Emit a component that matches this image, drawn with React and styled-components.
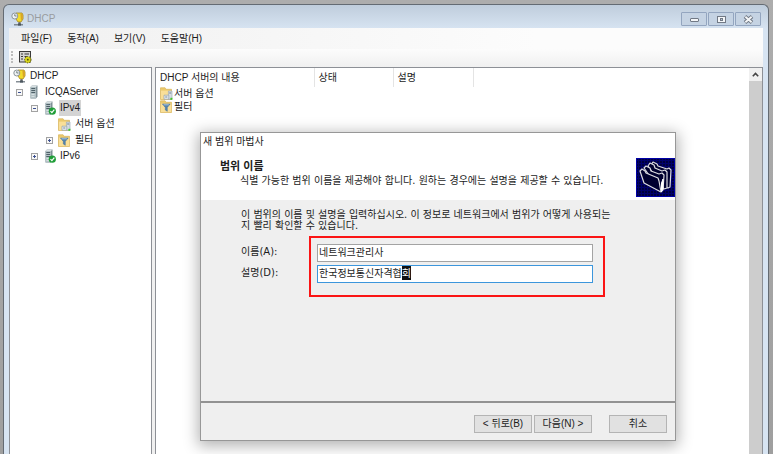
import { useEffect, useRef } from 'react'
import styled, { createGlobalStyle } from 'styled-components'

const GlobalStyle = createGlobalStyle`
  * {
    box-sizing: border-box;
  }

  body {
    margin: 0;
    background: #a6a6a6;
    color: #1c1c1c;
    font: 10px/16px "Liberation Sans", "Noto Sans CJK KR", sans-serif;
  }

  button, input {
    font: inherit;
    color: inherit;
  }
`

const Desktop = styled.div`
  height: 100vh;
  padding: 4px 4px 0 3px;
  overflow: hidden;
  background: linear-gradient(180deg, #adadad 0%, #9f9f9f 100%);
`

const Window = styled.main`
  position: relative;
  display: flex;
  flex-direction: column;
  height: 100%;
  padding: 0 5px;
  border: 1px solid #646b73;
  border-bottom: 0;
  border-radius: 6px 6px 0 0;
  background: linear-gradient(180deg, #bfcddc 0, #d7e4f2 24px);
`

const TitleBar = styled.header`
  display: flex;
  align-items: center;
  gap: 3px;
  height: 23px;
  flex: none;
  padding: 5px 2px 0;
`

const WindowTitle = styled.h1`
  flex: 1;
  margin: 0;
  color: #999c9f;
  font-size: 10px;
  font-weight: 400;
`

const CaptionButtons = styled.div`
  display: flex;
  gap: 1px;
`

const CaptionButton = styled.button`
  display: grid;
  place-items: center;
  width: 26px;
  height: 14px;
  padding: 0;
  border: 1px solid #93a5bf;
  border-radius: 1px;
  background: #c5d3e3;
`

const MenuBar = styled.nav`
  display: flex;
  align-items: center;
  gap: 15px;
  flex: none;
  height: 21px;
  padding-left: 12px;
  background: linear-gradient(90deg, #f0f0f0 0%, #fcfcfc 70%);
`

const MenuItem = styled.button`
  padding: 0;
  border: 0;
  background: none;
`

const Toolbar = styled.div`
  display: flex;
  align-items: center;
  gap: 6px;
  flex: none;
  height: 18px;
  padding: 0 2px 2px;
  background: linear-gradient(180deg, #fcfcfc 0%, #f0f0f0 100%);
`

const Grip = styled.span`
  height: 12px;
  border-left: 2px dotted #bdbdbd;
`

const ToolButton = styled.button`
  display: flex;
  padding: 0;
  border: 0;
  background: none;
`

const Panes = styled.div`
  display: flex;
  gap: 3px;
  flex: 1;
  min-height: 0;
  background: #f0f0f0;
`

const Pane = styled.section`
  display: flex;
  flex: ${({ $width }) => ($width ? `0 0 ${$width}` : '1')};
  min-width: 0;
  border: 1px solid #8d9096;
  border-bottom: 0;
  background: #fff;
`

const Tree = styled.ul`
  flex: 1;
  margin: 0;
  padding: 0;
  list-style: none;
`

const TreeRow = styled.li`
  display: flex;
  align-items: center;
  gap: 3px;
  height: 16px;
  padding-left: ${({ $level }) => 3 + $level * 15}px;
`

const Expander = styled.button`
  display: grid;
  place-items: center;
  width: 9px;
  height: 9px;
  margin: 0 1px 0 -13px;
  padding: 0;
  border: 0;
  background: none;
`

const IconSlot = styled.span`
  display: grid;
  place-items: center;
  flex: none;
  width: 13px;
  height: 14px;
`

const TreeLabel = styled.span`
  padding: 0 1px;
  background: ${({ $selected }) => ($selected ? '#d4d4d4' : 'transparent')};
`

const ListArea = styled.div`
  flex: 1;
  min-width: 0;
`

const ListTable = styled.table`
  width: 100%;
  border-collapse: collapse;
  table-layout: fixed;
`

const HeaderCell = styled.th`
  width: ${({ $width }) => $width || 'auto'};
  height: 19px;
  padding: 0 4px;
  border-right: ${({ $width }) => ($width ? '1px solid #e4e4e4' : '0')};
  font-weight: 400;
  line-height: 19px;
  text-align: left;
`

const Cell = styled.td`
  height: 13px;
  padding: 0 4px;
  line-height: 13px;
`

const ItemName = styled.span`
  display: flex;
  align-items: center;
  gap: 1px;
  height: 13px;
`

const ScrollBar = styled.div`
  flex: none;
  width: 13px;
  background: #cdcdcd;
`

const ScrollButton = styled.button`
  display: grid;
  place-items: center;
  width: 13px;
  height: 13px;
  padding: 0;
  border: 0;
  background: #f0f0f0;
`

const Dialog = styled.section`
  position: absolute;
  top: 127px;
  left: 196px;
  width: 476px;
  border: 1px solid #979797;
  background: #efefef;
  box-shadow: 0 3px 14px 2px rgba(0, 0, 0, 0.3);
`

const DialogTitle = styled.h2`
  margin: 0;
  padding: 1px 2px;
  background: #fff;
  font-size: 10px;
  font-weight: 400;
`

const DialogHeader = styled.header`
  display: flex;
  justify-content: space-between;
  height: 49px;
  padding: 7px 0 0 19px;
  background: #fff;
`

const StepTitle = styled.h3`
  margin: 0;
  font-size: 11px;
  font-weight: 700;
`

const Description = styled.p`
  margin: 0;
  padding-left: ${({ $indent }) => $indent || '0'};
  font-family: "DejaVu Sans", "Noto Sans CJK KR", sans-serif;
  line-height: ${({ $tight }) => ($tight ? '11px' : '14px')};
`

const DialogBody = styled.div`
  min-height: 201px;
  padding: 9px 40px;
`

const Form = styled.form`
  position: relative;
  display: grid;
  grid-template-columns: 76px 276px;
  gap: 3px 0;
  width: 352px;
  margin-top: 13px;
`

const FieldLabel = styled.label`
  font-family: "DejaVu Sans", "Noto Sans CJK KR", sans-serif;
`

const TextInput = styled.input`
  width: 100%;
  height: 18px;
  padding: 0 1px 3px;
  border: 1px solid #a3a3a3;
  border-radius: 0;
  outline: 0;
  background: #fff;

  &:focus {
    border-color: #3c96dc;
  }

  &::selection {
    background: #111;
    color: #fff;
  }
`

const Highlight = styled.div`
  position: absolute;
  inset: -8px -12px -14px 68px;
  border: 2px solid #fb1414;
  pointer-events: none;
`

const DialogFooter = styled.footer`
  display: flex;
  justify-content: flex-end;
  gap: 2px;
  padding: 12px 8px 7px;
  border-top: 2px solid #929292;
`

const DialogButton = styled.button`
  width: 58px;
  height: 18px;
  margin-left: ${({ $apart }) => ($apart ? '15px' : '0')};
  padding: 0;
  border: 1px solid #b4b4b4;
  background: #e1e1e1;
  line-height: 14px;
  white-space: nowrap;
`

const DhcpIcon = () => (
  <svg width="13" height="14" viewBox="0 0 13 14" aria-hidden="true">
    <path d="M5 1h6l1 2v4l-2 3H7L5 7z" fill="#f2dc2c" stroke="#a4861f" strokeWidth=".8" />
    <path d="M9.4 1.5H11l.6 2v3L10 9z" fill="#d9a32a" />
    <path d="M8.5 10v2" stroke="#777" strokeWidth="2" />
    <path d="M3 12.8h9" stroke="#66717a" strokeWidth="1.2" />
    <rect x="7" y="11.4" width="3" height="2.2" fill="#4b565e" />
    <circle cx="3.8" cy="4" r="3" fill="#eef2f4" stroke="#8d959a" />
    <path d="M3.8 2.2V4h1.8" fill="none" stroke="#566" strokeWidth=".8" />
  </svg>
)

const ServerIcon = ({ ok }) => (
  <svg width="12" height="14" viewBox="0 0 12 14" aria-hidden="true">
    <path d="M1.5 2 3 .5h5.5v11L7 13.4H1.5z" fill="#7f8f96" />
    <path d="M1.5 2H7v11.4H1.5z" fill="#b3c1c5" />
    <path d="M1.5 2 3 .5h5.5L7 2z" fill="#d9e1e3" />
    <path d="M2.3 3.5h3.9M2.3 5.5h3.9M2.3 7.5h3.9" stroke="#4f6068" />
    <path d="M2.5 9.5h3M2.5 11.5h3" stroke="#dfe8e8" strokeWidth=".8" />
    {ok && (
      <>
        <circle cx="8.3" cy="10.2" r="3.6" fill="#1f9e38" />
        <path d="m6.5 10.2 1.4 1.5 2.4-3" fill="none" stroke="#fff" strokeWidth="1.2" />
      </>
    )}
  </svg>
)

const FolderBase = () => (
  <>
    <path d="M.5.8h4.6l1 1.5h5.4v10.2H.5z" fill="#ecca6c" stroke="#d9b45a" strokeWidth=".7" />
    <path d="M1 3.6h10.2v8.5H1z" fill="#f9df98" />
  </>
)

const OptionsIcon = () => (
  <svg width="13" height="13" viewBox="0 0 13 13" aria-hidden="true">
    <FolderBase />
    <path d="M8.4 4H12v8.3H8.4z" fill="#d5dde4" stroke="#94a2ae" strokeWidth=".6" />
    <path d="M4 8.2h4.8v4H4z" fill="#eef2f6" stroke="#8fa0ae" strokeWidth=".7" />
    <path d="M5.2 10h2.2M9.2 6h2" stroke="#64788a" strokeWidth=".9" />
    <rect x="10.4" y="10.8" width="2" height="2" fill="#40c52a" />
  </svg>
)

const FilterIcon = () => (
  <svg width="13" height="13" viewBox="0 0 13 13" aria-hidden="true">
    <FolderBase />
    <path d="M2.4 4h7.8L7.3 7.4v3.9L5.3 10V7.4z" fill="#5484ad" stroke="#456d94" strokeWidth=".5" />
    <path d="M3.6 4.8h5.2" stroke="#b5d0e4" strokeWidth=".9" />
  </svg>
)

const ToolIcon = () => (
  <svg width="13" height="13" viewBox="0 0 13 13" aria-hidden="true">
    <rect x=".5" y=".5" width="11" height="10.5" fill="#d4d4d4" stroke="#3a3a3a" />
    <path d="M2 3h2M5.5 3H10M2 5.5h2M5.5 5.5H8M2 8h2" stroke="#3a3a3a" strokeWidth="1.2" />
    <circle cx="8.8" cy="8.7" r="3.2" fill="#d8d51c" stroke="#4b4a0c" strokeDasharray="1.2 1.1" />
    <circle cx="8.8" cy="8.7" r=".9" fill="#4b4a0c" />
  </svg>
)

const WizardIcon = () => (
  <svg width="39" height="39" viewBox="0 0 39 39" aria-hidden="true">
    <defs>
      <pattern id="dither" width="3" height="3" patternUnits="userSpaceOnUse">
        <rect width="3" height="3" fill="#00006c" />
        <rect width="2" height="2" fill="#00003c" />
      </pattern>
    </defs>
    <rect width="39" height="39" fill="url(#dither)" />
    <rect x=".5" y=".5" width="38" height="38" fill="none" stroke="#0000a8" />
    <g fill="#000030" stroke="#dcdce2" strokeWidth="1.2" strokeLinejoin="round">
      <path d="M15 7l2-3 4 2 1 2 9 3 2-1 2 2-1 17-2 1-10-4z" />
      <path d="M12 8l2-3 4 2 1 3 7 3 3-1 2 2v16l-3 1z" />
      <path d="M8 10l2-2 4 2 1 3 8 3 3-1 2 2-1 15-3 1z" />
      <path d="M4 13l2-2 3 2 1 2 12 5 1 3 2 11L8 25z" />
    </g>
    <path d="M25.5 34v-9l1.5-4v10z" fill="#fff" stroke="#fff" />
  </svg>
)

const CaptionGlyph = ({ kind }) => (
  <svg width="11" height="9" viewBox="0 0 11 9" aria-hidden="true">
    {kind === 'min' && (
      <rect x="1.5" y="3.5" width="8" height="3" rx=".5" fill="#f4f6f8" stroke="#717985" />
    )}
    {kind === 'max' && (
      <>
        <rect x="1.5" y="1.5" width="8" height="6" fill="#f4f6f8" stroke="#717985" />
        <rect x="4.5" y="3.5" width="2" height="2" fill="#b8c6d6" stroke="#717985" />
      </>
    )}
    {kind === 'close' && (
      <>
        <path d="m2 1.5 7 6m0-6-7 6" stroke="#717985" strokeWidth="3.8" />
        <path d="m2.4 1.8 6.2 5.4m0-5.4L2.4 7.2" stroke="#f4f6f8" strokeWidth="1.8" />
      </>
    )}
  </svg>
)

const ExpandGlyph = ({ open }) => (
  <svg width="7" height="7" viewBox="0 0 7 7" aria-hidden="true">
    <rect x=".5" y=".5" width="6" height="6" fill="#f8f8f8" stroke="#a2a2a2" />
    <path d={open ? 'M2 3.5h3' : 'M2 3.5h3M3.5 2v3'} stroke="#3c5090" />
  </svg>
)

const icons = {
  dhcp: <DhcpIcon />,
  server: <ServerIcon />,
  scope: <ServerIcon ok />,
  options: <OptionsIcon />,
  filter: <FilterIcon />,
}

const menus = ['파일(F)', '동작(A)', '보기(V)', '도움말(H)']

const captions = [
  { kind: 'min', label: '최소화' },
  { kind: 'max', label: '최대화' },
  { kind: 'close', label: '닫기' },
]

const treeItems = [
  { label: 'DHCP', level: 0, icon: 'dhcp' },
  { label: 'ICQAServer', level: 1, icon: 'server', open: true },
  { label: 'IPv4', level: 2, icon: 'scope', open: true, selected: true },
  { label: '서버 옵션', level: 3, icon: 'options' },
  { label: '필터', level: 3, icon: 'filter', open: false },
  { label: 'IPv6', level: 2, icon: 'scope', open: false },
]

const listItems = [
  { label: '서버 옵션', icon: 'options' },
  { label: '필터', icon: 'filter' },
]

const ScopeWizard = () => {
  const descriptionRef = useRef(null)

  // keep the last syllable marked, as while it is still being composed
  useEffect(() => {
    const input = descriptionRef.current
    input.focus()
    input.setSelectionRange(input.value.length - 1, input.value.length)
  }, [])

  return (
    <Dialog role="dialog" aria-labelledby="wizard-title">
      <DialogTitle id="wizard-title">새 범위 마법사</DialogTitle>
      <DialogHeader>
        <div>
          <StepTitle>범위 이름</StepTitle>
          <Description $indent="20px">
            식별 가능한 범위 이름을 제공해야 합니다. 원하는 경우에는 설명을 제공할 수 있습니다.
          </Description>
        </div>
        <WizardIcon />
      </DialogHeader>

      <DialogBody>
        <Description $tight>
          이 범위의 이름 및 설명을 입력하십시오. 이 정보로 네트워크에서 범위가 어떻게 사용되는
          <br />
          지 빨리 확인할 수 있습니다.
        </Description>
        <Form>
          <FieldLabel htmlFor="scope-name">이름(A):</FieldLabel>
          <TextInput id="scope-name" defaultValue="네트워크관리사" />
          <FieldLabel htmlFor="scope-description">설명(D):</FieldLabel>
          <TextInput
            id="scope-description"
            ref={descriptionRef}
            defaultValue="한국정보통신자격협회"
          />
          <Highlight />
        </Form>
      </DialogBody>

      <DialogFooter>
        <DialogButton>&lt; 뒤로(B)</DialogButton>
        <DialogButton>다음(N) &gt;</DialogButton>
        <DialogButton $apart>취소</DialogButton>
      </DialogFooter>
    </Dialog>
  )
}

const App = () => {
  return (
    <Desktop>
      <GlobalStyle />
      <Window>
        <TitleBar>
          <DhcpIcon />
          <WindowTitle>DHCP</WindowTitle>
          <CaptionButtons>
            {captions.map(({ kind, label }) => (
              <CaptionButton key={kind} aria-label={label}>
                <CaptionGlyph kind={kind} />
              </CaptionButton>
            ))}
          </CaptionButtons>
        </TitleBar>

        <MenuBar>
          {menus.map((menu) => (
            <MenuItem key={menu}>{menu}</MenuItem>
          ))}
        </MenuBar>

        <Toolbar>
          <Grip />
          <ToolButton aria-label="속성">
            <ToolIcon />
          </ToolButton>
        </Toolbar>

        <Panes>
          <Pane $width="143px">
            <Tree>
              {treeItems.map(({ label, level, icon, open, selected }) => (
                <TreeRow key={label} $level={level}>
                  {open !== undefined && (
                    <Expander aria-label={label} aria-expanded={open}>
                      <ExpandGlyph open={open} />
                    </Expander>
                  )}
                  <IconSlot>{icons[icon]}</IconSlot>
                  <TreeLabel $selected={selected}>{label}</TreeLabel>
                </TreeRow>
              ))}
            </Tree>
          </Pane>

          <Pane>
            <ListArea>
              <ListTable>
                <thead>
                  <tr>
                    <HeaderCell $width="158px">DHCP 서버의 내용</HeaderCell>
                    <HeaderCell $width="79px">상태</HeaderCell>
                    <HeaderCell $width="80px">설명</HeaderCell>
                    <HeaderCell />
                  </tr>
                </thead>
                <tbody>
                  {listItems.map(({ label, icon }) => (
                    <tr key={label}>
                      <Cell>
                        <ItemName>
                          <IconSlot>{icons[icon]}</IconSlot>
                          {label}
                        </ItemName>
                      </Cell>
                      <Cell />
                      <Cell />
                      <Cell />
                    </tr>
                  ))}
                </tbody>
              </ListTable>
            </ListArea>
            <ScrollBar>
              <ScrollButton aria-label="위로">
                <svg width="7" height="5" viewBox="0 0 7 5" aria-hidden="true">
                  <path d="M.8 4.2 3.5 1.5l2.7 2.7" fill="none" stroke="#444" strokeWidth="1.6" />
                </svg>
              </ScrollButton>
            </ScrollBar>
          </Pane>
        </Panes>

        <ScopeWizard />
      </Window>
    </Desktop>
  )
}

export default App
